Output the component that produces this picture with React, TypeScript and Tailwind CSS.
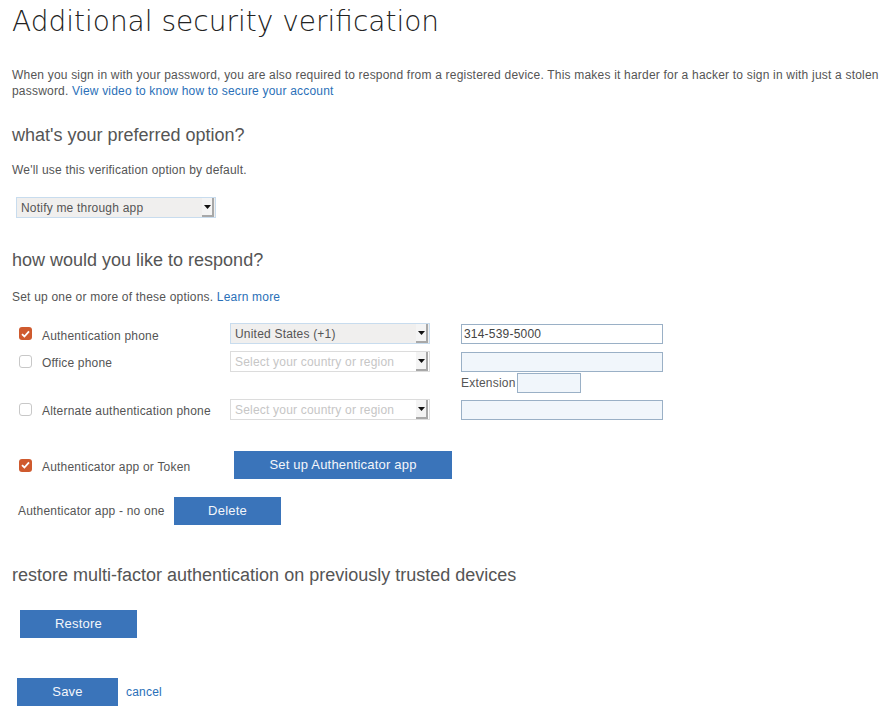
import React from 'react'

const body = "font-['Liberation_Sans',Arial,sans-serif]"

function Check({on}: {on?: boolean}) {
  if (on) {
    return (
      <span className="inline-flex w-[13px] h-[13px] rounded-[3px] bg-[#cf5a2e] items-center justify-center shrink-0">
        <svg width="9" height="8" viewBox="0 0 9 8">
          <path d="M1 4.2 L3.4 6.5 L8 1.3" stroke="#fff" strokeWidth="1.8" fill="none" />
        </svg>
      </span>
    )
  }
  return <span className="inline-block w-[13px] h-[13px] rounded-[3px] border border-[#c8c8c8] bg-white shrink-0" />
}

function Select({text, disabled, width = 'w-[200px]'}: {text: string; disabled?: boolean; width?: string}) {
  return (
    <div
      className={`${width} h-[21px] flex items-center border ${disabled ? 'border-[#dcdcdc] bg-white text-[#c6c6c6]' : 'border-[#c8dcee] bg-[#f0efee] text-[#555]'} text-[12px]`}
    >
      <span className="flex-1 pl-[4px] truncate">{text}</span>
      <span className="w-[12px] h-[19px] mr-[1px] flex items-center justify-center border-r-2 border-b-2 border-[#a8a8a8] bg-[#f4f4f4]">
        <svg width="7" height="4" viewBox="0 0 7 4">
          <path d="M0 0 H7 L3.5 4 Z" fill="#111" />
        </svg>
      </span>
    </div>
  )
}

function Input({value, fill}: {value?: string; fill?: boolean}) {
  return (
    <div
      className={`w-[202px] h-[20px] border border-[#9ab0c6] ${fill ? 'bg-[#f1f6fb]' : 'bg-white'} text-[12px] text-[#444] pl-[2px] leading-[18px]`}
    >
      {value}
    </div>
  )
}

function Btn({children, w}: {children: React.ReactNode; w: string}) {
  return (
    <button className={`${w} h-[28px] bg-[#3a74ba] text-[#f4f6fa] text-[13px]`}>{children}</button>
  )
}

export default function App() {
  return (
    <div className={`${body} tracking-[0.2px] bg-white text-[#555] w-[880px] h-[713px] overflow-hidden pl-[12px]`}>
      <h1 className="font-['DejaVu_Sans',sans-serif] tracking-normal text-[28px] text-[#222] pt-[4px] leading-[36px] font-extralight">
        Additional security verification
      </h1>

      <p className="text-[12px] leading-[16px] mt-[27px] text-[#555]">
        When you sign in with your password, you are also required to respond from a registered device. This makes it harder for a hacker to sign in with just a stolen password.{' '}
        <a className="text-[#2a70b8]">View video to know how to secure your account</a>
      </p>

      <h2 className="text-[18px] tracking-normal leading-[22px] mt-[25px] text-[#555]">what's your preferred option?</h2>
      <p className="text-[12px] leading-[16px] mt-[16px]">We'll use this verification option by default.</p>

      <div className="mt-[19px] ml-[4px]">
        <Select text="Notify me through app" />
      </div>

      <h2 className="text-[18px] tracking-normal leading-[22px] mt-[31px]">how would you like to respond?</h2>
      <p className="text-[12px] leading-[16px] mt-[18px]">
        Set up one or more of these options. <a className="text-[#2a70b8]">Learn more</a>
      </p>

      <div className="mt-[18px] ml-[7px] flex flex-col text-[12px]">
        <div className="flex items-center h-[21px]">
          <div className="w-[211px] flex items-center gap-[10px]">
            <Check on />
            <span className="mt-[4px]">Authentication phone</span>
          </div>
          <Select text="United States (+1)" />
          <div className="ml-[31px]">
            <Input value="314-539-5000" />
          </div>
        </div>

        <div className="flex items-center h-[21px] mt-[7px]">
          <div className="w-[211px] flex items-center gap-[10px]">
            <Check />
            <span className="mt-[3px]">Office phone</span>
          </div>
          <Select text="Select your country or region" disabled />
          <div className="ml-[31px]">
            <Input fill />
          </div>
        </div>
        <div className="flex items-center h-[20px] mt-[1px] pl-[442px]">
          <span>Extension</span>
          <div className="w-[64px] h-[20px] border border-[#9ab0c6] bg-[#f1f6fb] ml-[1px]" />
        </div>

        <div className="flex items-center h-[21px] mt-[6px]">
          <div className="w-[211px] flex items-center gap-[10px]">
            <Check />
            <span className="mt-[3px]">Alternate authentication phone</span>
          </div>
          <Select text="Select your country or region" disabled />
          <div className="ml-[31px]">
            <Input fill />
          </div>
        </div>

        <div className="flex items-center h-[28px] mt-[31px]">
          <div className="w-[215px] flex items-center gap-[10px]">
            <Check on />
            <span className="mt-[3px]">Authenticator app or Token</span>
          </div>
          <Btn w="w-[218px]">Set up Authenticator app</Btn>
        </div>

        <div className="flex items-center h-[28px] mt-[18px] -ml-[1px]">
          <span className="w-[156px]">Authenticator app - no one</span>
          <Btn w="w-[107px]">Delete</Btn>
        </div>
      </div>

      <h2 className="text-[18px] tracking-normal leading-[22px] mt-[39px]">restore multi-factor authentication on previously trusted devices</h2>

      <div className="mt-[24px] ml-[8px]">
        <Btn w="w-[117px]">Restore</Btn>
      </div>

      <div className="mt-[40px] ml-[5px] flex items-center gap-[8px]">
        <Btn w="w-[101px]">Save</Btn>
        <a className="text-[12px] text-[#2a70b8]">cancel</a>
      </div>
    </div>
  )
}
